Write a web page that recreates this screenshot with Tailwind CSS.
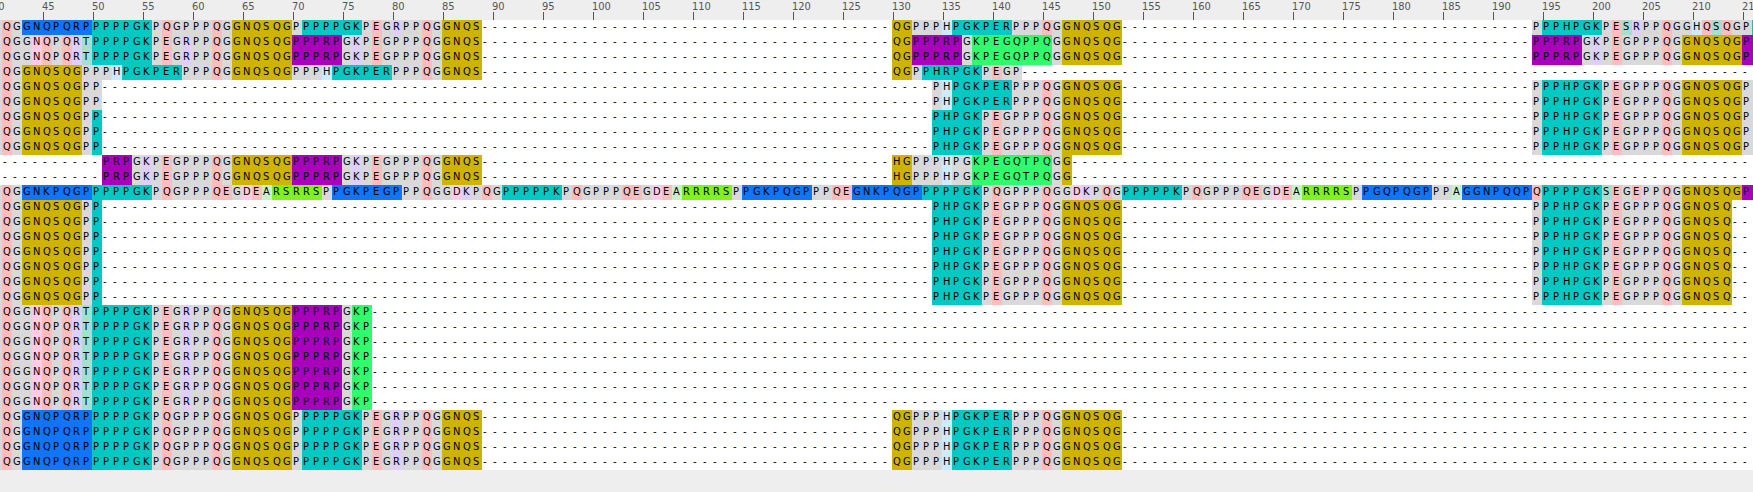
<!DOCTYPE html>
<html lang="en">
<head>
<meta charset="utf-8">
<title>Sequence alignment</title>
<script src="https://cdn.jsdelivr.net/npm/@tailwindcss/browser@4"></script>
</head>
<body class="w-[1753px] h-[492px] overflow-hidden bg-[#eeeeee] font-['DejaVu_Sans_Condensed','DejaVu_Sans',sans-serif] [font-stretch:condensed]">
<div id="ruler" class="flex h-5 pl-[2px] -ml-[10px] w-[1763px] overflow-hidden text-[11px] text-[#555555]"></div>
<main id="rows" class="flex flex-col w-[1753px] overflow-hidden bg-white text-[11px] text-black"></main>
<script>
const residue = {
  G: 'bg-[#d9d9d9]', P: 'bg-[#d9d9d9]', Q: 'bg-[#ffbdbd]', E: 'bg-[#ffbdbd]',
  N: 'bg-[#ffcce6]', D: 'bg-[#ffcce6]', R: 'bg-[#dfcfff]', K: 'bg-[#dfcfff]',
  S: 'bg-[#a5dfcd]', T: 'bg-[#a5dfcd]', A: 'bg-[#ccf0cc]', H: 'bg-[#ccebff]', '-': 'bg-white'
};
const motif = {
  b: 'bg-[#1175fa]', c: 'bg-[#04c9c2]', y: 'bg-[#ceb400]',
  m: 'bg-[#a800bb]', g: 'bg-[#30fd6c]', l: 'bg-[#80f31f]'
};
const Y = 'y[GNQSQG]', T = 'c[PPPPGK]', M = 'm[PPPRP]', C = 'c[PGKPER]';
const end = 'Pc[PPHPGK]PEGPPPQG';
const lead = 'QGb[GNQPQRP]' + T + 'PQGPPPQG' + Y + 'P' + T + 'PEGRPPQGy[GNQS]{41}y[QG]PPPH' + C + 'PPPQG' + Y;
const second = 'QGGNQPQRT' + T + 'PEGRPPQG' + Y + M + 'GKPEGPPPQGy[GNQS]{41}y[QG]' + M + 'Gg[KPEGQPPQ]G' + Y + '{41}' + M + 'GKPEGPPPQG' + Y + 'm[PP]';
const fourth = 'QG' + Y + 'PPPH' + C + 'PPPQG' + Y + 'PPPH' + C + 'PPPQGy[GNQS]{41}y[QG]Pc[PHRPGK]PEGP{74}';
const fifth = 'QG' + Y + 'PP{83}PH' + C + 'PPPQG' + Y + '{41}' + end + Y + 'PP';
const mid = 'QG' + Y + 'Pc[P]{83}c[PHPGK]PEGPPPQG' + Y + '{41}' + end;
const tenth = '{10}m[PRP]GKPEGPPPQG' + Y + M + 'GKPEGPPPQGy[GNQS]{41}y[HG]PPPHPGg[KPEGQTPQ]Gy[G]{69}';
const twelfth = 'QGb[GNKPQGP]' + T + 'PQGPPPQEGDEAl[RSRRS]Pb[PGKPEGP]PPQGGDKPQGc[PPPPPK]PQGPPPQEGDEAl[RRRRS]Pb[PGKPQGP]PPQEb[GNKPQGP]' + T + 'PQGPPPQGGDKPQGc[PPPPPK]PQGPPPQEGDEAl[RRRRS]Pb[PGQPQGP]PPAb[GGNPQQP]Q' + T + 'SEGEPPQG' + Y + 'm[PP]';
const short = 'QGGNQPQRT' + T + 'PEGRPPQG' + Y + M + 'Gg[KP]{139}';
const rep = (s, n) => Array(n).fill(s);
const rows = [
  lead + '{41}Pc[PPHPGK]PESRPPQGGHQSQGPc[P]',
  second, second, fourth, fifth, fifth,
  ...rep(mid + Y + 'PP', 3),
  tenth, tenth, twelfth,
  ...rep(mid + 'y[GNQSQ]{3}', 7),
  ...rep(short, 7),
  ...rep(lead + '{64}', 4)
];
// The last column only shows a one-pixel sliver of its background.
const cell = (ch, bg, last) => last
  ? `<span class="w-px shrink-0 ${bg}"></span>`
  : `<span class="w-[10px] shrink-0 pl-px ${bg}">${ch}</span>`;
document.getElementById('rows').innerHTML = rows.map(r => {
  let html = `<span class="w-[2px] shrink-0 ${r[0] === '{' ? 'bg-white' : 'bg-[#d9d9d9]'}"></span>`, i = 0;
  for (const t of r.matchAll(/([a-z])\[([A-Z]+)\]|\{(\d+)\}|([A-Z])/g)) {
    const s = t[2] || (t[3] ? '-'.repeat(+t[3]) : t[4]);
    for (const ch of s) html += cell(ch, t[1] ? motif[t[1]] : residue[ch], ++i === 176);
  }
  return `<div class="flex h-[15px] w-[1753px] leading-[13px]">${html}</div>`;
}).join('');
let ruler = '';
for (let n = 40; n <= 215; n += 5) {
  ruler += `<div class="flex flex-col shrink-0 w-[50px]"><span class="h-3 leading-[13px]">${n}</span><span class="ml-px h-2 w-px bg-[#555555]"></span></div>`;
}
document.getElementById('ruler').innerHTML = ruler;
</script>
</body>
</html>
